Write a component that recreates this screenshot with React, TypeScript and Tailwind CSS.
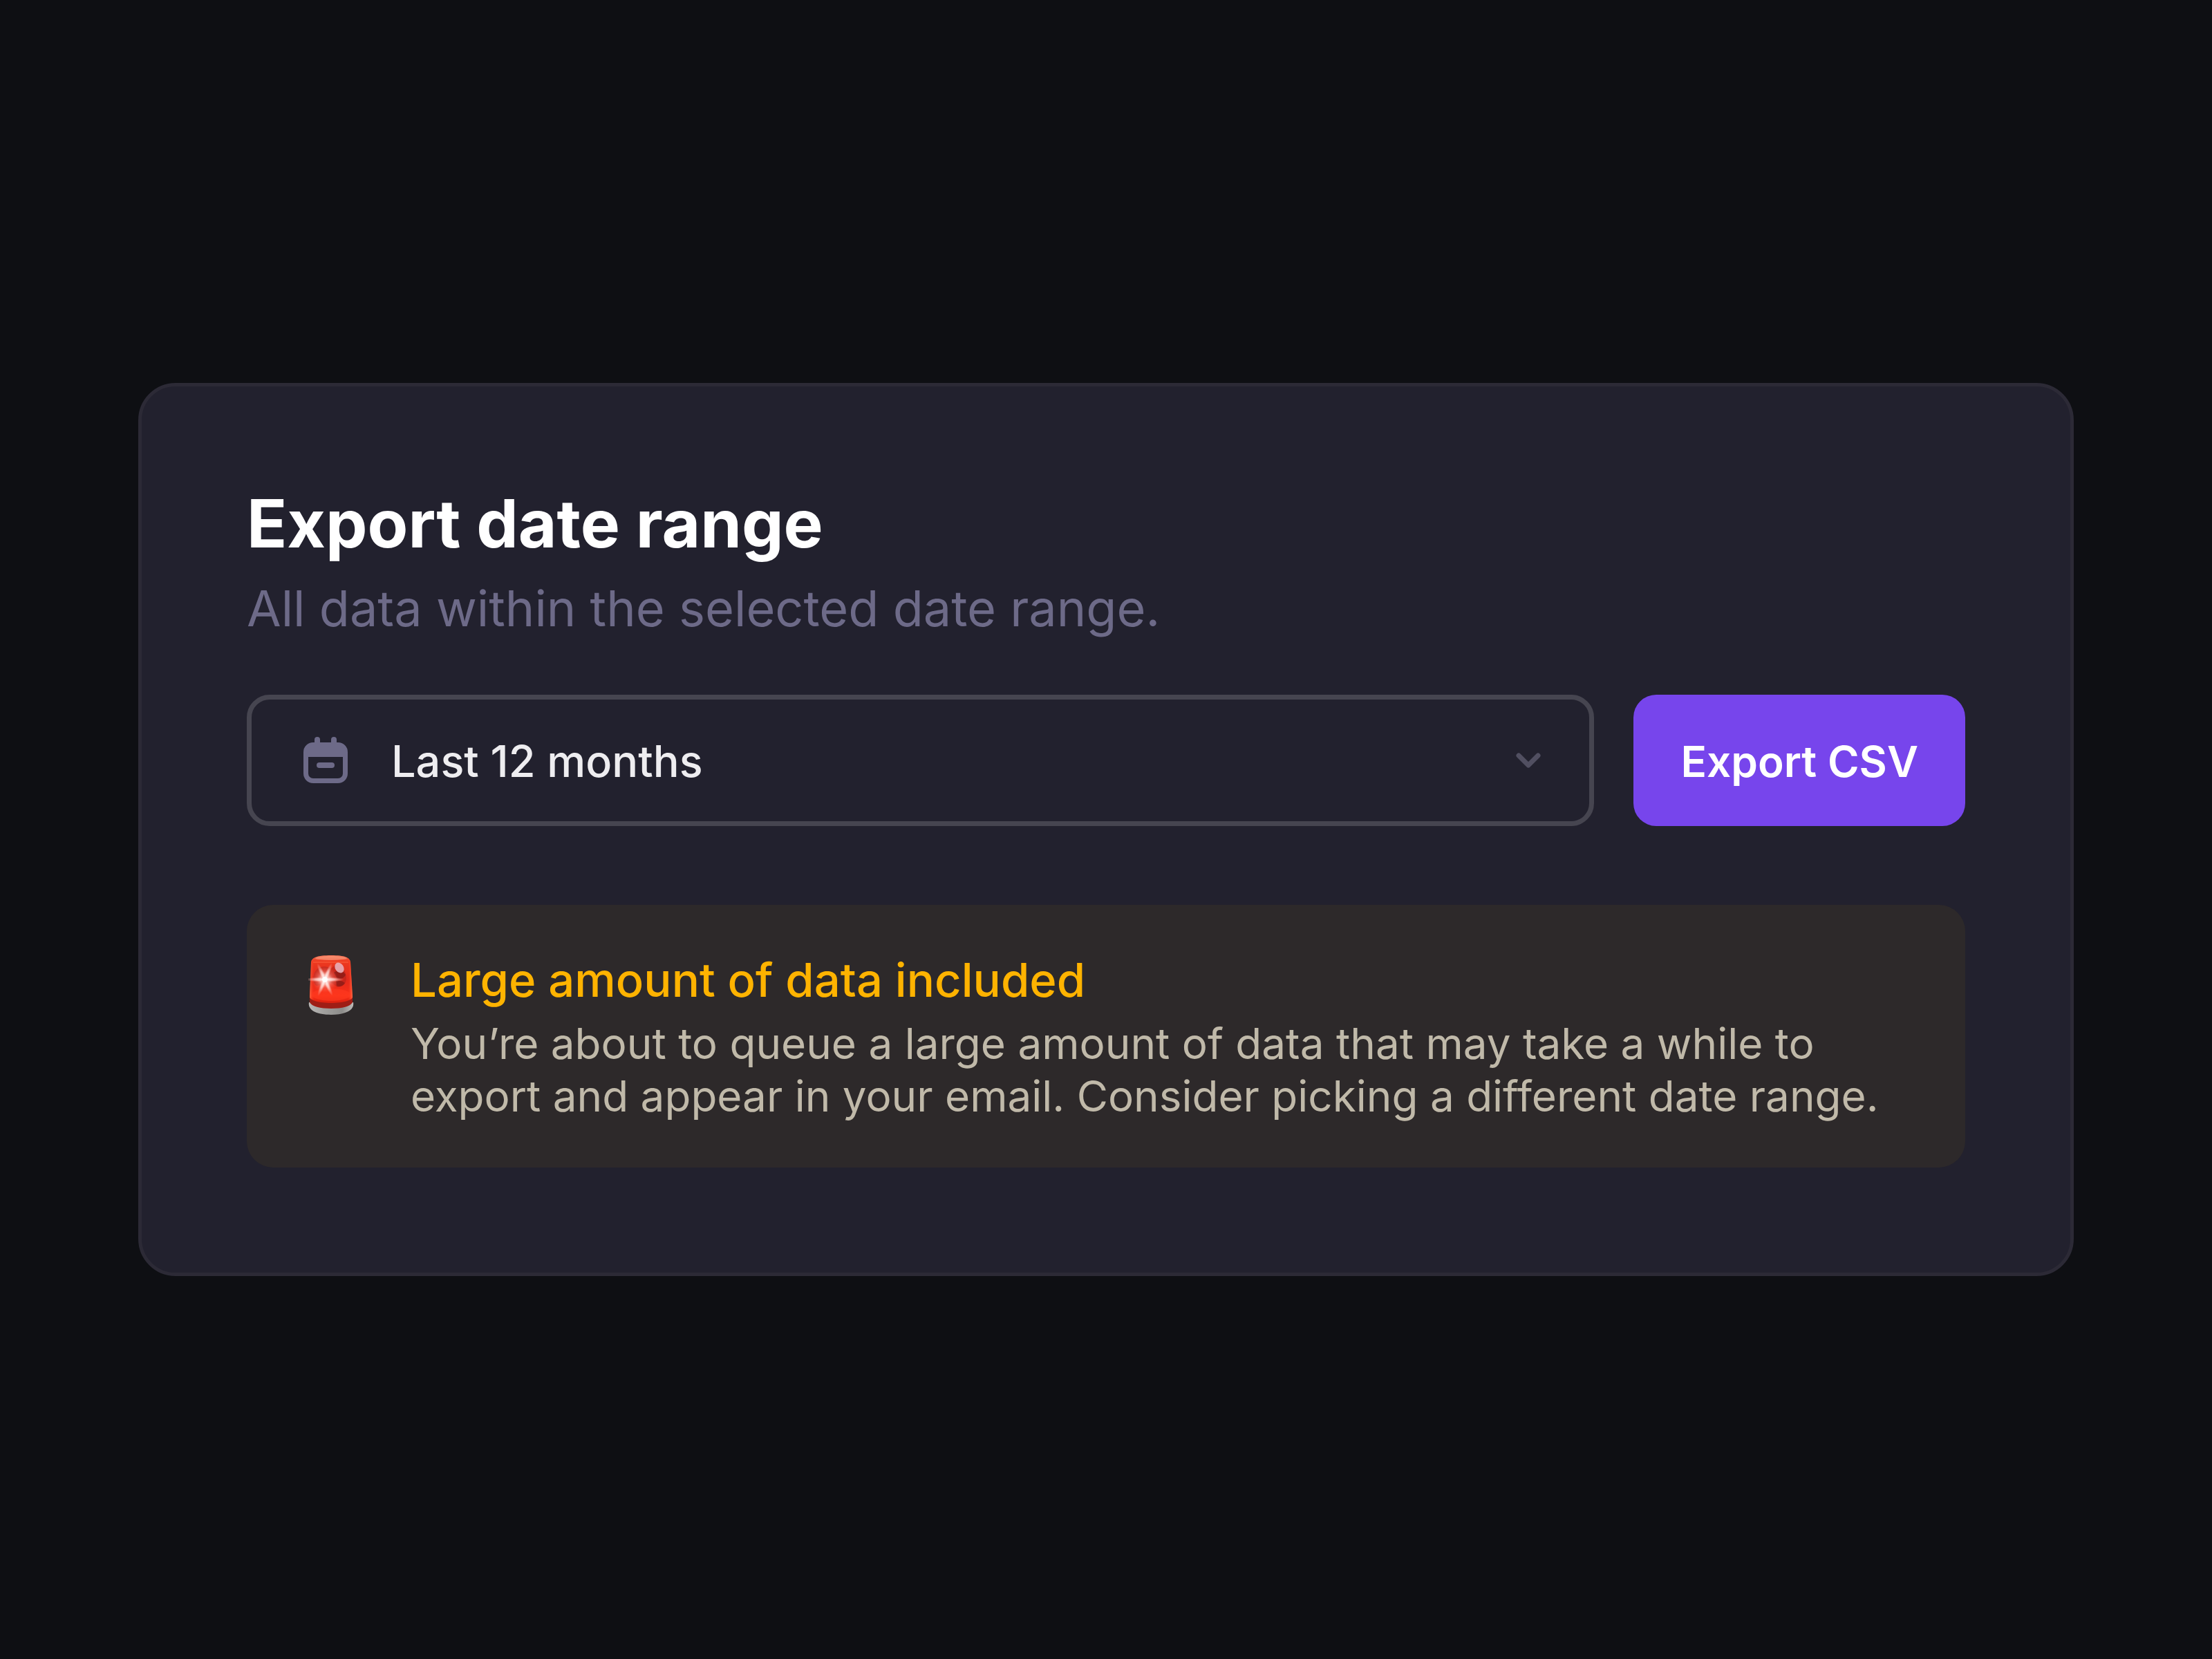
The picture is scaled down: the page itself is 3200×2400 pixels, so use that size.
import { useState } from 'react';

const ranges = ['Last 12 months', 'Last 6 months', 'Last 30 days', 'Last 7 days'];

function CalendarIcon({ className }: { className?: string }) {
  return (
    <svg viewBox="0 0 64 68" fill="currentColor" className={className} aria-hidden="true">
      <rect x="16" y="0" width="8" height="16" rx="4" />
      <rect x="40" y="0" width="8" height="16" rx="4" />
      <path
        fillRule="evenodd"
        d="M14 8h36a14 14 0 0 1 14 14v31a14 14 0 0 1-14 14H14A14 14 0 0 1 0 53V22A14 14 0 0 1 14 8ZM7 29v24a7 7 0 0 0 7 7h36a7 7 0 0 0 7-7V29Z"
      />
      <rect x="19" y="37" width="26" height="8" rx="4" />
    </svg>
  );
}

function ChevronIcon({ className }: { className?: string }) {
  return (
    <svg viewBox="0 0 36 22" fill="none" className={className} aria-hidden="true">
      <path d="M4 4l14 14L32 4" stroke="currentColor" strokeWidth="7" strokeLinecap="round" strokeLinejoin="round" />
    </svg>
  );
}

function SirenIcon({ className }: { className?: string }) {
  return (
    <svg viewBox="0 0 66 86" className={className} aria-hidden="true">
      <defs>
        <linearGradient id="base" x1="0" x2="1">
          <stop offset="0" stopColor="#b9b7b5" />
          <stop offset="0.35" stopColor="#a09f9d" />
          <stop offset="0.75" stopColor="#8d8c8a" />
          <stop offset="1" stopColor="#bdbbb9" />
        </linearGradient>
        <linearGradient id="glass" x1="0" y1="0" x2="0" y2="1">
          <stop offset="0" stopColor="#f4785a" />
          <stop offset="0.12" stopColor="#ee3a20" />
          <stop offset="0.5" stopColor="#e02a1c" />
          <stop offset="0.85" stopColor="#fb3018" />
          <stop offset="1" stopColor="#d9200f" />
        </linearGradient>
        <linearGradient id="edge" x1="0" x2="1">
          <stop offset="0" stopColor="#ff7a50" stopOpacity="0.7" />
          <stop offset="0.1" stopColor="#ff3a20" stopOpacity="0" />
          <stop offset="0.9" stopColor="#ff3a20" stopOpacity="0" />
          <stop offset="1" stopColor="#ff7a50" stopOpacity="0.8" />
        </linearGradient>
        <radialGradient id="glow">
          <stop offset="0" stopColor="#fff" />
          <stop offset="0.25" stopColor="#ffe9e6" stopOpacity="0.9" />
          <stop offset="0.6" stopColor="#ff9a8c" stopOpacity="0.4" />
          <stop offset="1" stopColor="#ff6a55" stopOpacity="0" />
        </radialGradient>
        <radialGradient id="ray">
          <stop offset="0" stopColor="#fff" />
          <stop offset="0.5" stopColor="#ffd5cf" stopOpacity="0.8" />
          <stop offset="1" stopColor="#ff9a8c" stopOpacity="0" />
        </radialGradient>
      </defs>
      <path d="M1 68c-2 11 10 18 32 18s34-7 32-18Z" fill="url(#base)" />
      <path d="M2 60v8c3 6 15 9 31 9s28-3 31-9v-8Z" fill="#9f1d15" />
      <path d="M4 10C5 3 13 0 33 0s27 3 28 10l3 50c0 5-14 9-31 9S2 65 2 60Z" fill="url(#glass)" />
      <path d="M4 10C5 3 13 0 33 0s27 3 28 10l3 50c0 5-14 9-31 9S2 65 2 60Z" fill="url(#edge)" />
      <ellipse cx="33" cy="4" rx="23" ry="3" fill="#f9a184" opacity="0.6" />
      <path d="M7 10h51" stroke="#ff7048" strokeWidth="1" opacity="0.8" />
      <ellipse cx="33" cy="57" rx="28" ry="9" fill="#ff3a20" opacity="0.6" />
      <path d="M8 28c3-11 15-15 25-9l7-6c9 0 15 11 15 20 0 8-5 13-13 13l-8-6-22 4C7 41 6 34 8 28Z" fill="#b8241c" opacity="0.65" />
      <path d="M37 25c6-4 13-3 17 3-2 5-7 7-12 6M40 37c5-1 10 0 13 3-3 5-8 6-12 4Z" fill="#7c1915" opacity="0.65" />
      <ellipse cx="45" cy="18" rx="6" ry="8" transform="rotate(-35 45 18)" fill="#e8a9b1" opacity="0.95" />
      <circle cx="24" cy="35" r="19" fill="url(#glow)" />
      <ellipse cx="24" cy="35" rx="28" ry="4" fill="url(#ray)" />
      <ellipse cx="24" cy="35" rx="26" ry="4" transform="rotate(65 24 35)" fill="url(#ray)" />
      <ellipse cx="24" cy="35" rx="26" ry="4" transform="rotate(113 24 35)" fill="url(#ray)" />
      <circle cx="24" cy="35" r="4" fill="#fff" />
    </svg>
  );
}

export default function App() {
  const [range, setRange] = useState(ranges[0]);

  return (
    <main className="flex min-h-screen items-center justify-center bg-[#0e0f13] px-[200px] font-['Inter',sans-serif]">
      <section className="w-full rounded-[54px] border-[5px] border-[#2c2a36] bg-[#22212e] p-[152px]">
        <h1 className="text-[96px] leading-[92px] font-[650] text-white">Export date range</h1>
        <p className="mt-[26px] text-[72px] leading-[102px] text-[#6d6a88]">All data within the selected date range.</p>

        <form className="mt-[74px] flex gap-[57px]" onSubmit={(e) => e.preventDefault()}>
          <div className="grid flex-1 items-center">
            <select
              aria-label="Date range"
              value={range}
              onChange={(e) => setRange(e.target.value)}
              className="col-start-1 row-start-1 h-[190px] w-full appearance-none rounded-[33px] border-[7px] border-[#464550] bg-transparent pt-0.5 pr-[140px] pl-[202px] text-[63px] font-medium text-[#eeedf0]"
            >
              {ranges.map((r) => (
                <option key={r}>{r}</option>
              ))}
            </select>
            <CalendarIcon className="pointer-events-none col-start-1 row-start-1 ml-[82px] h-[68px] w-16 text-[#6d6a88]" />
            <ChevronIcon className="pointer-events-none col-start-1 row-start-1 mr-[77px] h-[22px] w-9 justify-self-end text-[#514f61]" />
          </div>
          <button type="submit" className="h-[190px] rounded-[33px] bg-[#7745ec] px-[68px] pt-0.5 text-[62px] font-semibold text-white">
            Export CSV
          </button>
        </form>

        <div role="alert" className="mt-[114px] flex gap-[82px] rounded-[38px] bg-[#2d292a] py-[65px] pr-[100px] pl-[89px]">
          <SirenIcon className="mt-2 h-[86px] w-[66px] shrink-0" />
          <div>
            <h2 className="text-[67px] leading-[88px] font-medium text-[#ffb300]">Large amount of data included</h2>
            <p className="mt-[10px] text-[62px] leading-[76px] text-[#c0b9a9]">
              You’re about to queue a large amount of data that may take a while to export and appear in your email. Consider picking a different date range.
            </p>
          </div>
        </div>
      </section>
    </main>
  );
}
